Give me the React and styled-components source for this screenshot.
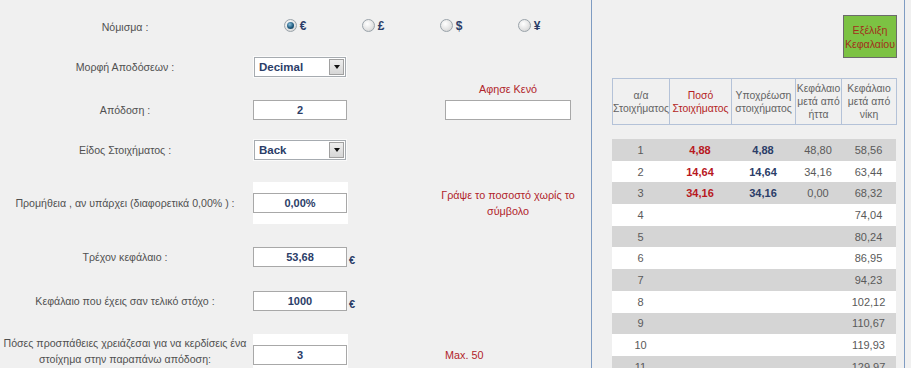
import styled, { createGlobalStyle } from "styled-components";

const GlobalStyle = createGlobalStyle`
    html, body {
        margin: 0;
        padding: 0;
        background: #f0f0f0;
        font-family: "Liberation Sans", Arial, sans-serif;
        font-size: 11px;
        overflow: hidden;
    }
`

const Page = styled.div`
    display: flex;
    height: 368px;
`
const Left = styled.div`
    width: 591px;
    display: flex;
    flex-direction: column;
`
const FormRow = styled.div`
    display: grid;
    grid-template-columns: 253px 95px 77px 166px;
    align-items: center;
    height: ${p => p.$h}px;
    flex: none;
`
const Label = styled.div`
    width: 250px;
    text-align: center;
    color: #505050;
    font-size: 10.6px;
    line-height: 16px;
    white-space: nowrap;
    align-self: ${p => (p.$top ? "start" : "center")};
    padding-top: ${p => (p.$top ? 1 : 0)}px;
`
const RadioGroup = styled.div`
    grid-column: 2 / 5;
    display: flex;
    padding-left: 3px;
`
const RadioItem = styled.div`
    width: 78px;
    display: flex;
    justify-content: center;
    align-items: center;
    gap: 3px;
    margin-top: -3px;
`
const Radio = styled.span`
    width: 11px;
    height: 11px;
    border-radius: 50%;
    border: 1px solid #9aa3aa;
    background: radial-gradient(circle at 40% 35%, #ffffff, #e2e2e2 60%, #c9c9c9);
    display: flex;
    align-items: center;
    justify-content: center;

    &::after {
        content: "";
        width: 7px;
        height: 7px;
        border-radius: 50%;
        display: ${p => (p.$on ? "block" : "none")};
        background: radial-gradient(circle at 40% 35%, #8cc0dc, #1f5a7e 55%, #0d3149);
    }
`
const Symbol = styled.span`
    font-weight: bold;
    color: #2b3d68;
    font-size: 12px;
`
const Select = styled.div`
    width: 90px;
    height: 18px;
    border: 1px solid #a6abb0;
    background: #fff;
    display: flex;
    align-items: center;
    justify-content: space-between;
    margin-left: 1px;
    box-shadow: 0 0 0 1px #fafafa;
`
const SelectText = styled.span`
    padding-left: 4px;
    font-weight: bold;
    color: #2b3d68;
    font-size: 11.5px;
`
const Arrow = styled.span`
    width: 13px;
    height: 14px;
    margin-right: 1px;
    border: 1px solid #a0a0a0;
    background: linear-gradient(#eeeeee, #d6d6d6);
    display: flex;
    align-items: center;
    justify-content: center;

    &::after {
        content: "";
        border-left: 3px solid transparent;
        border-right: 3px solid transparent;
        border-top: 4px solid #111;
    }
`
const Input = styled.input`
    box-sizing: border-box;
    width: ${p => p.$w || 94}px;
    height: 20px;
    border: 1px solid #a8a8a8;
    background: #fff;
    text-align: center;
    font-family: "Liberation Sans", Arial, sans-serif;
    font-size: 11px;
    font-weight: bold;
    color: #2b3d68;
    padding: 0;
    outline: none;
`
const WhiteCell = styled.div`
    background: #fff;
    height: ${p => p.$h}px;
    width: 95px;
    display: flex;
    align-items: ${p => p.$align || "center"};
    padding-top: ${p => p.$pt || 0}px;
    box-sizing: border-box;
`
const Euro = styled.span`
    font-weight: bold;
    color: #2b3d68;
    margin-top: 6px;
    padding-left: 1px;
`
const Note = styled.div`
    grid-column: 4;
    color: #b0242a;
    font-size: 10.8px;
    text-align: ${p => (p.$left ? "left" : "center")};
    padding-left: ${p => (p.$left ? 20 : 0)}px;
    line-height: 16px;
`
const NoteStack = styled.div`
    grid-column: 4;
    align-self: start;
    padding-top: 2px;
    display: flex;
    flex-direction: column;
    align-items: center;
    gap: 4px;
    color: #b0242a;
    font-size: 10.8px;
    line-height: 14px;
`

const Right = styled.div`
    width: 314px;
    border-left: 1px solid #7f9cc2;
    border-right: 1px solid #7f9cc2;
    padding: 15px 7px 0 20px;
    box-sizing: border-box;
    display: flex;
    flex-direction: column;
`
const ButtonRow = styled.div`
    display: flex;
    justify-content: flex-end;
`
const GreenButton = styled.button`
    width: 54px;
    height: 43px;
    background: #7cc243;
    border: 1px solid #6b6b6b;
    color: #a2301c;
    font-family: "Liberation Sans", Arial, sans-serif;
    font-size: 10.6px;
    line-height: 14px;
    padding: 0;
    cursor: pointer;
`
const Table = styled.table`
    width: 284px;
    border-collapse: collapse;
    table-layout: fixed;
    margin-top: ${p => p.$mt}px;
`
const Th = styled.th`
    border: 1px solid #b4c2d8;
    font-weight: normal;
    font-size: 10.4px;
    color: ${p => (p.$red ? "#b41e24" : "#636363")};
    padding: 3px 0;
    line-height: 13px;
    height: 39px;
    vertical-align: middle;
    white-space: nowrap;
    overflow: hidden;
`
const Tr = styled.tr`
    background: ${p => (p.$odd ? "#d5d5d5" : "#ffffff")};
    height: 21.7px;
`
const Td = styled.td`
    text-align: center;
    padding: 0;
    color: ${p => (p.$kind === "red" ? "#b8181e" : p.$kind === "navy" ? "#2b3d68" : "#5a5a5a")};
    font-weight: ${p => (p.$kind ? "bold" : "normal")};
`

const Cols = () => (
    <colgroup>
        <col style={{ width: 57 }} />
        <col style={{ width: 62 }} />
        <col style={{ width: 64 }} />
        <col style={{ width: 46 }} />
        <col style={{ width: 55 }} />
    </colgroup>
)

const rows = [
    ["1", "4,88", "4,88", "48,80", "58,56"],
    ["2", "14,64", "14,64", "34,16", "63,44"],
    ["3", "34,16", "34,16", "0,00", "68,32"],
    ["4", "", "", "", "74,04"],
    ["5", "", "", "", "80,24"],
    ["6", "", "", "", "86,95"],
    ["7", "", "", "", "94,23"],
    ["8", "", "", "", "102,12"],
    ["9", "", "", "", "110,67"],
    ["10", "", "", "", "119,93"],
    ["11", "", "", "", "129,97"],
]

const currencies = ["€", "£", "$", "¥"]

const App = () => {
    return (
        <>
            <GlobalStyle />
            <Page>
                <Left>
                    <FormRow $h={54}>
                        <Label>Νόμισμα :</Label>
                        <RadioGroup>
                            {currencies.map((c, i) => (
                                <RadioItem key={c}>
                                    <Radio $on={i === 0} />
                                    <Symbol>{c}</Symbol>
                                </RadioItem>
                            ))}
                        </RadioGroup>
                    </FormRow>
                    <FormRow $h={26}>
                        <Label>Μορφή Αποδόσεων :</Label>
                        <Select>
                            <SelectText>Decimal</SelectText>
                            <Arrow />
                        </Select>
                    </FormRow>
                    <FormRow $h={60}>
                        <Label>Απόδοση :</Label>
                        <Input readOnly value="2" />
                        <span />
                        <NoteStack>
                            <span>Αφησε Κενό</span>
                            <Input readOnly value="" $w={126} />
                        </NoteStack>
                    </FormRow>
                    <FormRow $h={20}>
                        <Label>Είδος Στοιχήματος :</Label>
                        <Select>
                            <SelectText>Back</SelectText>
                            <Arrow />
                        </Select>
                    </FormRow>
                    <FormRow $h={86}>
                        <Label>Προμήθεια , αν υπάρχει (διαφορετικά 0,00% ) :</Label>
                        <WhiteCell $h={42}>
                            <Input readOnly value="0,00%" />
                        </WhiteCell>
                        <span />
                        <Note>Γράψε το ποσοστό χωρίς το<br />σύμβολο</Note>
                    </FormRow>
                    <FormRow $h={22}>
                        <Label>Τρέχον κεφάλαιο :</Label>
                        <Input readOnly value="53,68" />
                        <Euro>€</Euro>
                    </FormRow>
                    <FormRow $h={66}>
                        <Label>Κεφάλαιο που έχεις σαν τελικό στόχο :</Label>
                        <Input readOnly value="1000" />
                        <Euro>€</Euro>
                    </FormRow>
                    <FormRow $h={42}>
                        <Label $top>Πόσες προσπάθειες χρειάζεσαι για να κερδίσεις ένα<br />στοίχημα στην παραπάνω απόδοση:</Label>
                        <WhiteCell $h={42} $align="flex-start" $pt={11}>
                            <Input readOnly value="3" />
                        </WhiteCell>
                        <span />
                        <Note $left>Max. 50</Note>
                    </FormRow>
                </Left>
                <Right>
                    <ButtonRow>
                        <GreenButton>Εξέλιξη<br />Κεφαλαίου</GreenButton>
                    </ButtonRow>
                    <Table $mt={20}>
                        <Cols />
                        <thead>
                            <tr>
                                <Th>α/α<br />Στοιχήματος</Th>
                                <Th $red>Ποσό<br />Στοιχήματος</Th>
                                <Th>Υποχρέωση<br />στοιχήματος</Th>
                                <Th>Κεφάλαιο<br />μετά από<br />ήττα</Th>
                                <Th>Κεφάλαιο<br />μετά από<br />νίκη</Th>
                            </tr>
                        </thead>
                    </Table>
                    <Table $mt={14}>
                        <Cols />
                        <tbody>
                            {rows.map((r, i) => (
                                <Tr key={r[0]} $odd={i % 2 === 0}>
                                    <Td>{r[0]}</Td>
                                    <Td $kind="red">{r[1]}</Td>
                                    <Td $kind="navy">{r[2]}</Td>
                                    <Td>{r[3]}</Td>
                                    <Td>{r[4]}</Td>
                                </Tr>
                            ))}
                        </tbody>
                    </Table>
                </Right>
            </Page>
        </>
    )
}

export default App
